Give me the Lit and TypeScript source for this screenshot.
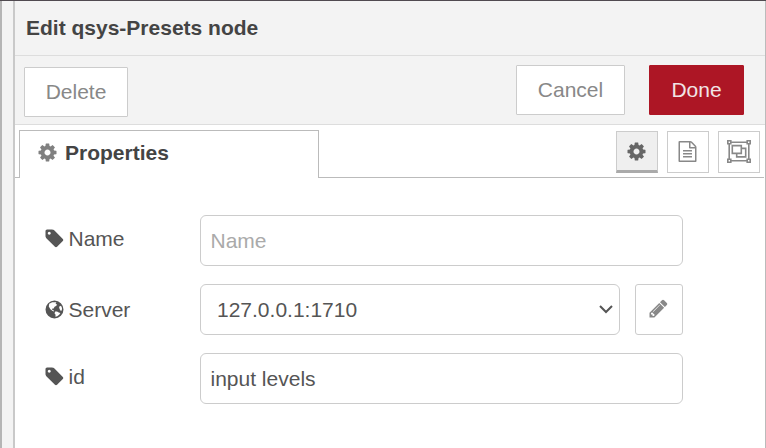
import { LitElement, html, css, svg } from "lit";
import { customElement } from "lit/decorators.js";

const COG = "M1152 896q0-106-75-181t-181-75-181 75-75 181 75 181 181 75 181-75 75-181zm512-109v222q0 12-8 23t-20 13l-185 28q-19 54-39 91 35 50 107 138 10 12 10 25t-9 23q-27 37-99 108t-94 71q-12 0-26-9l-138-108q-44 23-91 38-16 136-29 186-7 28-36 28h-222q-14 0-24.5-8.5t-11.5-21.5l-28-184q-49-16-90-37l-141 107q-10 9-25 9-14 0-25-11-126-114-165-168-7-10-7-23 0-12 8-23 15-21 51-66.5t54-70.5q-27-50-41-99l-183-27q-13-2-21-12.5t-8-23.5v-222q0-12 8-23t19-13l186-28q14-46 39-92-40-57-107-138-10-12-10-24 0-10 9-23 26-36 98.5-107.5t94.5-71.5q13 0 26 10l138 107q44-23 91-38 16-136 29-186 7-28 36-28h222q14 0 24.5 8.5t11.5 21.5l28 184q49 16 90 37l142-107q9-9 24-9 13 0 25 10 129 119 165 170 7 8 7 22 0 12-8 23-15 21-51 66.5t-54 70.5q26 50 41 98l183 28q13 2 21 12.5t8 23.5z";
const TAG = "M576 448q0-53-37.5-90.5t-90.5-37.5-90.5 37.5-37.5 90.5 37.5 90.5 90.5 37.5 90.5-37.5 37.5-90.5zm1067 576q0 53-37 90l-491 492q-39 37-91 37-53 0-90-37l-715-716q-38-37-64.5-101t-26.5-117v-416q0-52 38-90t90-38h416q53 0 117 26.5t102 64.5l715 714q37 39 37 91z";
const PENCIL = "M491 1536l91-91-235-235-91 91v107h128v128h107zm523-928q0-22-22-22-10 0-17 7l-542 542q-7 7-7 17 0 22 22 22 10 0 17-7l542-542q7-7 7-17zm-54-192l416 416-832 832h-416v-416zm683 96q0 53-37 90l-166 166-416-416 166-165q36-38 90-38 53 0 91 38l235 234q37 39 37 91z";
const FILE = "M1596 380q28 28 48 76t20 88v1152q0 40-28 68t-68 28h-1344q-40 0-68-28t-28-68v-1600q0-40 28-68t68-28h896q40 0 88 20t76 48zm-444-244v376h376q-10-29-22-41l-313-313q-12-12-41-22zm384 1528v-1024h-416q-40 0-68-28t-28-68v-416h-768v1536h1280zm-1024-864q0-14 9-23t23-9h704q14 0 23 9t9 23v64q0 14-9 23t-23 9h-704q-14 0-23-9t-9-23v-64zm736 224q14 0 23 9t9 23v64q0 14-9 23t-23 9h-704q-14 0-23-9t-9-23v-64q0-14 9-23t23-9h704zm0 256q14 0 23 9t9 23v64q0 14-9 23t-23 9h-704q-14 0-23-9t-9-23v-64q0-14 9-23t23-9h704z";

const glyph = (d: string) => html`<svg class="icon" viewBox="0 0 1792 1792">${svg`<path d=${d} />`}</svg>`;

const globe = html`<svg class="icon" viewBox="0 0 21 21">
  <path fill-rule="evenodd" d="M10.5 1.5a9 9 0 1 0 0 18a9 9 0 1 0 0-18zM5.2 4.8L8.2 3.2L12.4 3.3L11.6 4.8L13.2 5.8L12 7L10.6 7.8L9.6 9.4L8 9.8L8.2 10.8L9.8 11.4L10.2 12.6L8.6 12L6.4 10.2L4.8 7.4zM11.2 12.6L13 12.6L14.8 13.4L16.4 14L15.2 15.8L13.2 17.2L11.4 17.8L11.6 15.8L10.5 14.2zM15 7.8L17 6.8L18 9L17.8 11.4L16.6 11.8L15.6 10z" />
</svg>`;

const group = html`<svg class="group" viewBox="0 0 24 23" fill="none" stroke="currentColor" stroke-width="1.6">
  <path d="M4 2.2H20M4 20.8H20M2.2 4V19M21.8 4V19" />
  <path d="M.8.8h3v3h-3zM20.2.8h3v3h-3zM.8 19.2h3v3h-3zM20.2 19.2h3v3h-3z" />
  <path d="M5.3 5.6H14.3V13.4H5.3zM14.3 8.4H18.7V16.9H9.7V13.4" />
</svg>`;

@customElement("app-root")
class AppRoot extends LitElement {
  static styles = css`
    :host { display: flex; width: 766px; height: 448px; box-sizing: border-box; overflow: hidden; border-top: 1px solid #504a50; background: #f3f3f3; font: 21px/30px "Liberation Sans", Arial, sans-serif; color: #555; }
    * { box-sizing: border-box; }
    .canvas { width: 2px; background: #b5b5b5; }
    .gutter { width: 13px; border-right: 2px solid #c9c9c9; background: #f3f3f3; }
    .tray { width: 751px; display: flex; flex-direction: column; background: #fff; border-right: 1px solid #bbb; }
    .title { height: 55px; padding: 12px 11px; border-bottom: 1px solid #ddd; background: #f3f3f3; font-weight: bold; color: #444; }
    .toolbar { height: 69px; display: flex; align-items: flex-start; padding: 9px 21px 0 9px; border-bottom: 1px solid #ddd; background: #f3f3f3; }
    .button { height: 50px; display: flex; align-items: center; justify-content: center; border: 1px solid #ccc; background: #fff; color: #888; border-radius: 1px; }
    .delete { width: 104px; margin: 2px auto 0 0; }
    .cancel { width: 109px; margin-right: 24px; }
    .done { width: 95px; border-color: #ad1625; background: #ad1625; color: #f1e4e5; }
    .tabs { height: 53px; display: flex; align-items: stretch; padding-right: 1px; }
    .rule { width: 4px; border-bottom: 1px solid #bbb; }
    .tab { width: 300px; margin-top: 5px; display: flex; align-items: center; padding: 0 0 4px 16.5px; gap: 7.5px; border: 1px solid #bbb; border-bottom: 0; font-weight: bold; color: #444; }
    .tab .icon { color: #808080; }
    .tools { flex: 1; display: flex; justify-content: flex-end; align-items: flex-start; gap: 9px; padding: 6px 4px 0 0; border-bottom: 1px solid #bbb; }
    .tool { width: 42px; height: 42px; display: flex; align-items: center; justify-content: center; padding: 0 1px 1px 0; border: 1px solid #ccc; color: #888; }
    .selected { background: #efefef; border-bottom: 3px solid #aaa; padding-bottom: 0; color: #666; }
    .icon { width: 21px; height: 21px; fill: currentColor; flex: none; }
    .group { width: 24px; height: 23px; flex: none; }
    .form { display: flex; flex-direction: column; gap: 18px; padding: 37px 0 0 28.5px; }
    .row { display: flex; height: 51px; }
    .label { width: 156.5px; display: flex; align-items: flex-start; padding-top: 9px; gap: 4px; }
    .label .icon { margin-top: 4px; }
    .server { padding-top: 11px; }
    .server .icon { margin-top: 3.5px; }
    .field { width: 483px; display: flex; align-items: center; padding: 1px 9.5px 0; border: 1px solid #ccc; border-radius: 6px; }
    .placeholder { color: #aaa; }
    .select { width: 420px; padding: 1px 5px 0 16px; justify-content: space-between; }
    .chevron { width: 16px; height: 10px; margin-top: -2px; fill: none; stroke: #555; stroke-width: 2; }
    .edit { width: 48px; height: 51px; margin-left: 15px; padding: 0 1px 2px 0; border-radius: 3px; }
  `;

  render() {
    return html`
      <div class="canvas"></div>
      <div class="gutter"></div>
      <div class="tray">
        <div class="title">Edit qsys-Presets node</div>
        <div class="toolbar">
          <div class="button delete">Delete</div>
          <div class="button cancel">Cancel</div>
          <div class="button done">Done</div>
        </div>
        <div class="tabs">
          <div class="rule"></div>
          <div class="tab">${glyph(COG)}<span>Properties</span></div>
          <div class="tools">
            <div class="tool selected">${glyph(COG)}</div>
            <div class="tool">${glyph(FILE)}</div>
            <div class="tool">${group}</div>
          </div>
        </div>
        <div class="form">
          <div class="row">
            <div class="label">${glyph(TAG)}<span>Name</span></div>
            <div class="field placeholder">Name</div>
          </div>
          <div class="row">
            <div class="label server">${globe}<span>Server</span></div>
            <div class="field select"><span>127.0.0.1:1710</span><svg class="chevron" viewBox="0 0 16 10"><path d="M2 2l6 6 6-6" /></svg></div>
            <div class="button edit">${glyph(PENCIL)}</div>
          </div>
          <div class="row">
            <div class="label">${glyph(TAG)}<span>id</span></div>
            <div class="field">input levels</div>
          </div>
        </div>
      </div>
    `;
  }
}
